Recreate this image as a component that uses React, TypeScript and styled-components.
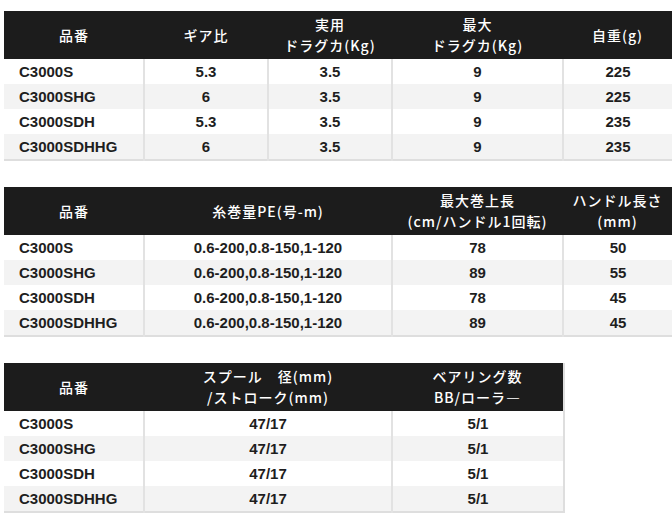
import React from "react";
import styled, { createGlobalStyle } from "styled-components";

const GlobalStyle = createGlobalStyle`
  html, body {
    margin: 0;
    padding: 0;
    background: #ffffff;
  }
  body {
    font-family: "Liberation Sans", "Noto Sans CJK JP", sans-serif;
  }
`;

const StyledPage = styled.div`
  display: flex;
  flex-direction: column;
  gap: 26px;
  padding: 11px 0 0 4px;
`;

const StyledTable = styled.table<{ $width: number }>`
  width: ${(p) => p.$width}px;
  table-layout: fixed;
  border-collapse: collapse;
  border-bottom: 2px solid #dedede;
  border-right: 2px solid #dedede;
`;

const StyledTh = styled.th<{ $width: number }>`
  width: ${(p) => p.$width}px;
  height: 48px;
  padding: 0;
  background-color: #1c1c1c;
  color: #ffffff;
  font-family: "Noto Sans CJK JP", sans-serif;
  font-size: 14px;
  font-weight: 500;
  line-height: 21px;
  letter-spacing: 1px;
  text-align: center;
  vertical-align: middle;
  white-space: nowrap;
`;

const StyledTr = styled.tr<{ $striped: boolean }>`
  height: 25px;
  background-color: ${(p) => (p.$striped ? "#f3f3f3" : "#ffffff")};
`;

const StyledTd = styled.td<{ $left?: boolean }>`
  padding: 0 0 0 ${(p) => (p.$left ? "15px" : "0")};
  border-left: 2px solid #e2e2e2;
  color: #1e1e1e;
  font-size: 15px;
  font-weight: 700;
  line-height: 25px;
  text-align: ${(p) => (p.$left ? "left" : "center")};
  white-space: nowrap;

  &:first-child {
    border-left: none;
  }
`;

type Column = { label: React.ReactNode; width: number };

type SpecTableProps = {
  width: number;
  columns: Column[];
  rows: string[][];
};

const SpecTable = ({ width, columns, rows }: SpecTableProps) => (
  <StyledTable $width={width}>
    <thead>
      <tr>
        {columns.map((c, i) => (
          <StyledTh key={i} $width={c.width}>
            {c.label}
          </StyledTh>
        ))}
      </tr>
    </thead>
    <tbody>
      {rows.map((r, i) => (
        <StyledTr key={i} $striped={i % 2 === 1}>
          {r.map((cell, j) => (
            <StyledTd key={j} $left={j === 0}>
              {cell}
            </StyledTd>
          ))}
        </StyledTr>
      ))}
    </tbody>
  </StyledTable>
);

const models = ["C3000S", "C3000SHG", "C3000SDH", "C3000SDHHG"];

const table1: Column[] = [
  { label: "品番", width: 140 },
  { label: "ギア比", width: 124 },
  {
    label: (
      <>
        実用
        <br />
        ドラグカ(Kg)
      </>
    ),
    width: 124,
  },
  {
    label: (
      <>
        最大
        <br />
        ドラグカ(Kg)
      </>
    ),
    width: 171,
  },
  { label: "自重(g)", width: 109 },
];

const table2: Column[] = [
  { label: "品番", width: 140 },
  { label: "糸巻量PE(号-m)", width: 248 },
  {
    label: (
      <>
        最大巻上長
        <br />
        (cm/ハンドル1回転)
      </>
    ),
    width: 171,
  },
  {
    label: (
      <>
        ハンドル長さ
        <br />
        (mm)
      </>
    ),
    width: 109,
  },
];

const table3: Column[] = [
  { label: "品番", width: 140 },
  {
    label: (
      <>
        スプール　径(mm)
        <br />
        /ストローク(mm)
      </>
    ),
    width: 248,
  },
  {
    label: (
      <>
        ベアリング数
        <br />
        BB/ローラ―
      </>
    ),
    width: 171,
  },
];

const rows1 = [
  [models[0], "5.3", "3.5", "9", "225"],
  [models[1], "6", "3.5", "9", "225"],
  [models[2], "5.3", "3.5", "9", "235"],
  [models[3], "6", "3.5", "9", "235"],
];

const pe = "0.6-200,0.8-150,1-120";
const rows2 = [
  [models[0], pe, "78", "50"],
  [models[1], pe, "89", "55"],
  [models[2], pe, "78", "45"],
  [models[3], pe, "89", "45"],
];

const rows3 = models.map((m) => [m, "47/17", "5/1"]);

const App = () => {
  return (
    <>
      <GlobalStyle />
      <StyledPage>
        <SpecTable width={670} columns={table1} rows={rows1} />
        <SpecTable width={670} columns={table2} rows={rows2} />
        <SpecTable width={561} columns={table3} rows={rows3} />
      </StyledPage>
    </>
  );
};

export default App;
